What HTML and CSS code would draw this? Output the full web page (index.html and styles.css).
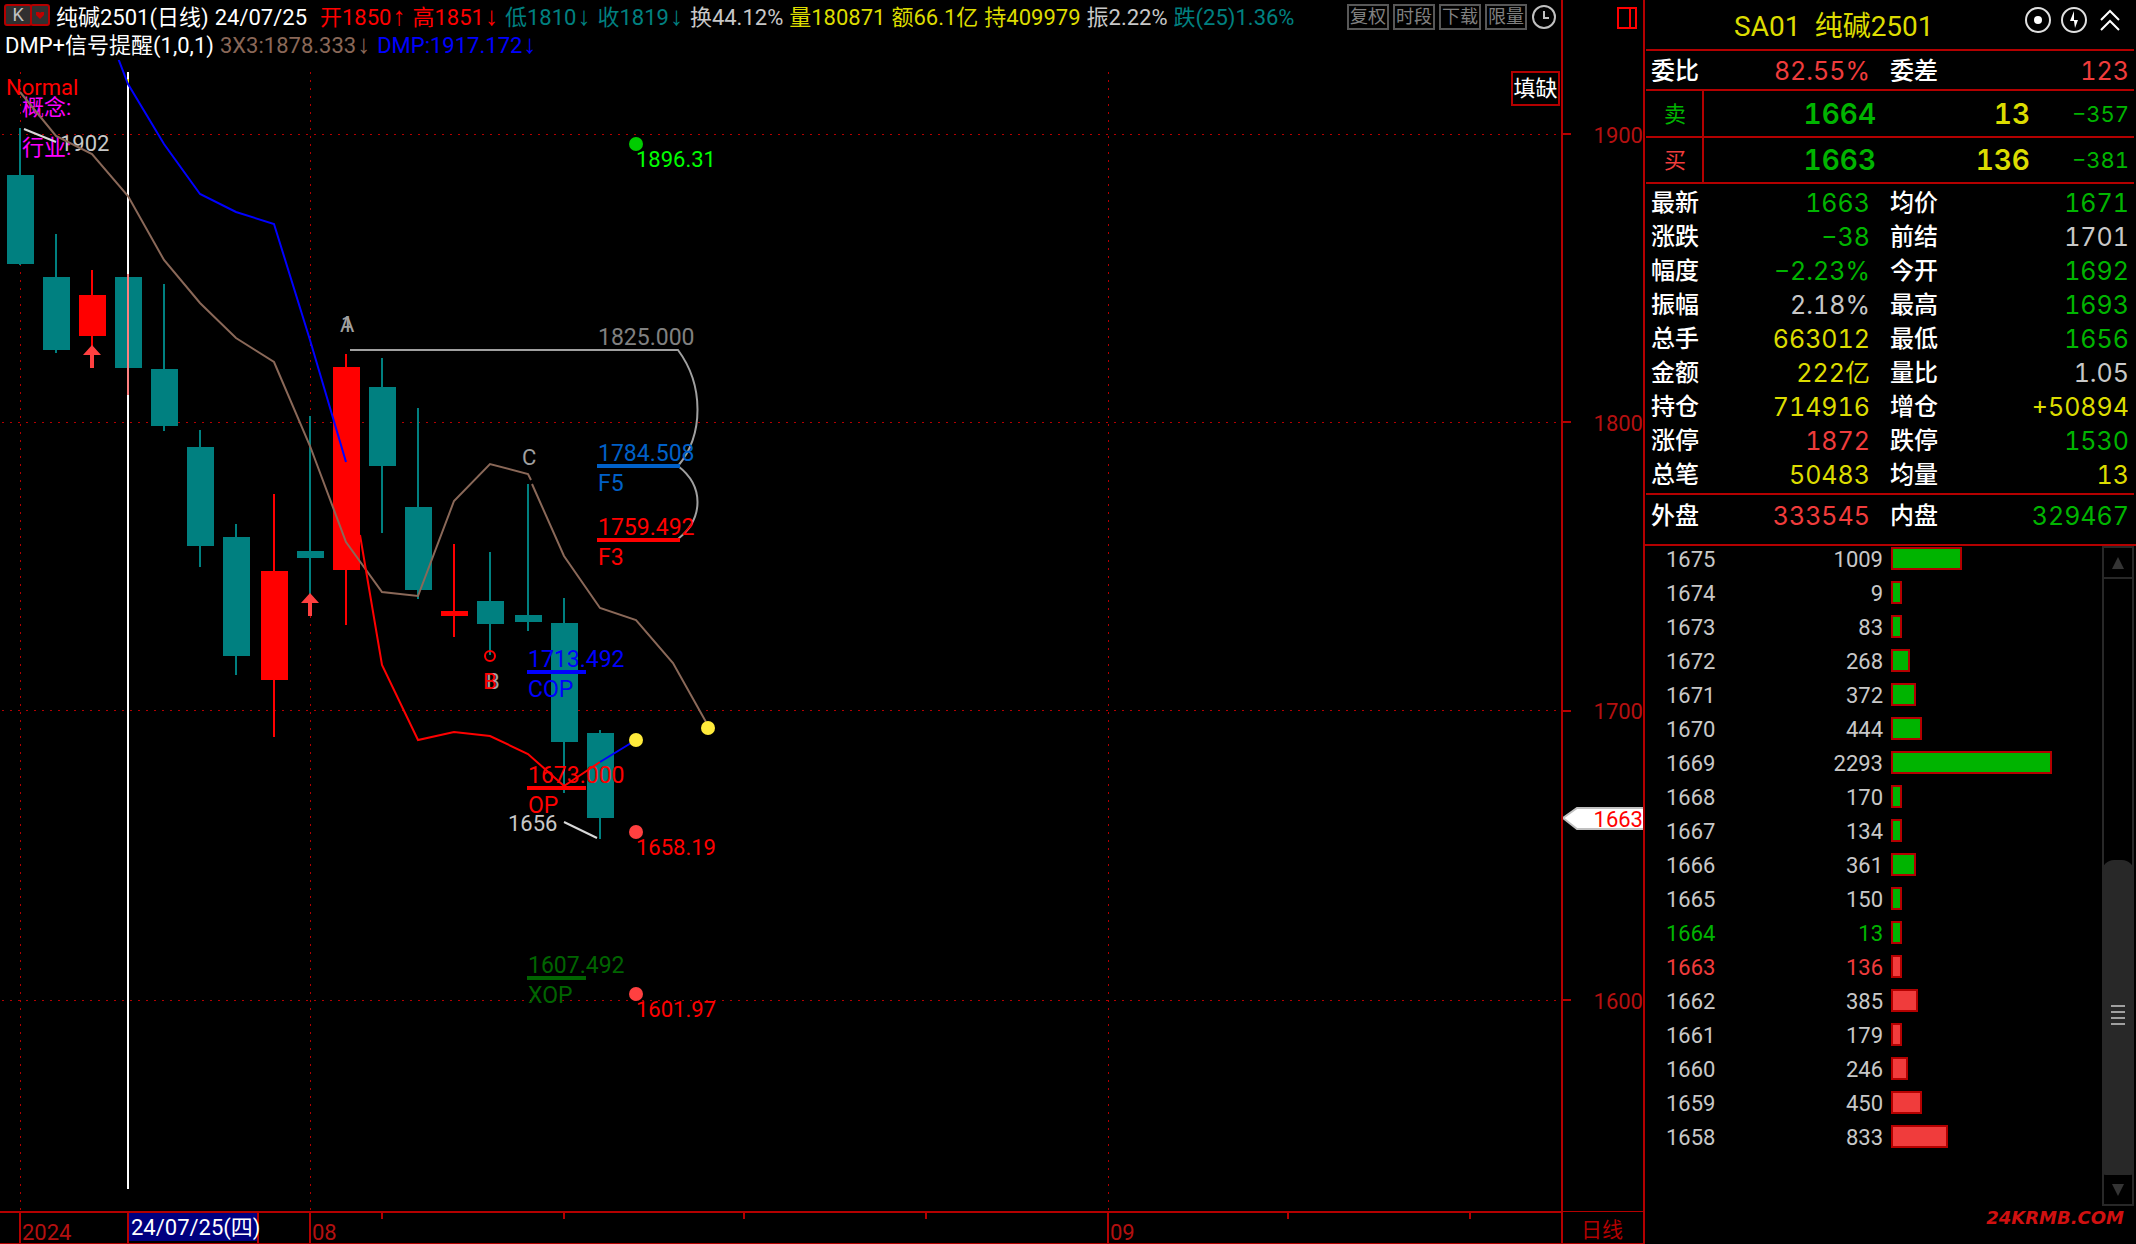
FILE: index.html
```html
<!DOCTYPE html>
<html lang="zh-CN">
<head>
<meta charset="utf-8">
<title>SA01 纯碱2501</title>
<link rel="stylesheet" href="styles.css">
</head>
<body>
<main class="board">
  <section class="chart">
    <header class="info">
      <div class="info-row">
        <div class="period">
          <button class="period-key" type="button">K</button>
          <button class="period-more" type="button" aria-label="周期"><svg width="10" height="8" viewBox="0 0 10 8"><path d="M1 1h3l1 1 1-1h3v3L5 8 1 4z" fill="#c00000"/></svg></button>
        </div>
        <h1 class="quote white">纯碱2501(日线)</h1>
        <span class="date white">24/07/25</span>
        <span class="red">开1850<i class="arr">↑</i></span>
        <span class="red">高1851<i class="arr">↓</i></span>
        <span class="teal">低1810<i class="arr">↓</i></span>
        <span class="teal">收1819<i class="arr">↓</i></span>
        <span class="silver">换44.12%</span>
        <span class="yellow">量180871</span>
        <span class="yellow">额66.1亿</span>
        <span class="yellow">持409979</span>
        <span class="silver">振2.22%</span>
        <span class="teal">跌(25)1.36%</span>
        <nav class="tools">
          <button type="button">复权</button>
          <button type="button">时段</button>
          <button type="button">下载</button>
          <button type="button">限量</button>
          <button type="button" class="clock" aria-label="时钟"><svg width="26" height="26" viewBox="0 0 26 26" fill="none" stroke="#c0c0c0" stroke-width="2"><circle cx="13" cy="13" r="11"/><path d="M13 7v7h5"/></svg></button>
        </nav>
      </div>
      <div class="info-row second">
        <span class="white">DMP+信号提醒(1,0,1)</span>
        <span class="brown">3X3:1878.333<i class="arr">↓</i></span>
        <span class="blue">DMP:1917.172<i class="arr">↓</i></span>
      </div>
    </header>
    <button class="gap-btn" type="button">填缺</button>
    <svg class="plot" role="img" aria-label="日线K线图">
      <g transform="translate(0 -60)">
        <g class="grid">
          <line x1="2" y1="134.5" x2="100%" y2="134.5"/>
          <line x1="2" y1="422.5" x2="100%" y2="422.5"/>
          <line x1="2" y1="710.5" x2="100%" y2="710.5"/>
          <line x1="2" y1="1000.5" x2="100%" y2="1000.5"/>
          <line x1="20.5" y1="72" x2="20.5" y2="1210"/>
          <line x1="310.5" y1="72" x2="310.5" y2="1210"/>
          <line x1="1108.5" y1="72" x2="1108.5" y2="1210"/>
        </g>
        <g class="down">
          <path d="M19 128h2v137h-2zM7 175h27v89H7z"/>
          <path d="M55 234h2v119h-2zM43 277h27v73H43z"/>
          <path d="M115 277h27v91h-27z"/>
          <path d="M163 284h2v147h-2zM151 369h27v57h-27z"/>
          <path d="M199 430h2v137h-2zM187 447h27v99h-27z"/>
          <path d="M235 524h2v151h-2zM223 537h27v119h-27z"/>
          <path d="M309 416h2v179h-2zM297 551h27v7h-27z"/>
          <path d="M381 358h2v175h-2zM369 387h27v79h-27z"/>
          <path d="M417 408h2v191h-2zM405 507h27v83h-27z"/>
          <path d="M489 552h2v103h-2zM477 601h27v23h-27z"/>
          <path d="M527 484h2v147h-2zM515 615h27v7h-27z"/>
          <path d="M563 598h2v195h-2zM551 623h27v119h-27z"/>
          <path d="M599 730h2v109h-2zM587 733h27v85h-27z"/>
        </g>
        <g class="up">
          <path d="M91 270h2v78h-2zM79 295h27v41H79z"/>
          <path d="M273 494h2v243h-2zM261 571h27v109h-27z"/>
          <path d="M345 354h2v271h-2zM333 367h27v203h-27z"/>
          <path d="M453 544h2v93h-2zM441 611h27v5h-27z"/>
        </g>
        <path class="signal" d="M92 345l9 10h-7v13h-4v-13h-7z"/>
        <path class="signal" d="M310 593l9 10h-7v13h-4v-13h-7z"/>
        <rect x="127" y="72" width="2" height="1117" fill="#ffffff"/>
        <rect x="127" y="274" width="2" height="121" fill="#ff8080"/>
        <rect x="127" y="79" width="2" height="6" fill="#ffff00"/>

        <text class="magenta" x="22" y="115">概念:</text>
        <text class="magenta" x="22" y="155">行业:</text>
        <text class="silver" x="60" y="151">1902</text>
        <path class="lead" d="M24 129L56 142"/>
        <text class="red" x="6" y="95">Normal</text>

        <polyline class="ln brown" points="20,92 56,136 92,154 128,196 164,260 200,303 236,338 274,362 310,446 346,542 382,592 418,596 454,501 490,464 528,474 531,480"/>
        <polyline class="ln brown" points="532,484 564,556 600,608 636,620 673,663 706,722"/>
        <polyline class="ln blue" points="118,58 128,84 164,144 200,194 236,212 274,224 310,340 346,462"/>
        <polyline class="ln red" points="360,535 382,665 418,740 454,732 490,736 528,754 564,786 600,762"/>
        <polyline class="ln blue" points="600,762 636,740"/>

        <text class="grey" x="340" y="332">A</text>
        <text class="grey" x="341" y="332">1</text>
        <path class="measure" d="M350 350H678C704 385 704 435 678 466C704 486 704 518 678 539"/>
        <text class="lab grey2" x="598" y="345">1825.000</text>
        <text class="lab azure" x="598" y="461">1784.508</text>
        <path class="level azure" d="M597 466H680"/>
        <text class="lab azure" x="598" y="491">F5</text>
        <text class="lab red" x="598" y="535">1759.492</text>
        <path class="level red" d="M597 540H680"/>
        <text class="lab red" x="598" y="565">F3</text>
        <text class="grey" x="522" y="465">C</text>
        <circle cx="490" cy="656" r="5" fill="none" stroke="#ff0000" stroke-width="2"/>
        <text class="grey" x="486" y="689">B</text>
        <text class="red" x="483" y="689">B</text>
        <text class="lab blue" x="528" y="667">1713.492</text>
        <path class="level blue" d="M527 672H586"/>
        <text class="lab blue" x="528" y="697">COP</text>
        <text class="lab red" x="528" y="783">1673.000</text>
        <path class="level red" d="M527 788H586"/>
        <text class="lab red" x="528" y="813">OP</text>
        <text class="silver" x="508" y="831">1656</text>
        <path class="lead" d="M564 822L597 838"/>
        <text class="lab forest" x="528" y="973">1607.492</text>
        <path class="level forest" d="M527 978H586"/>
        <text class="lab forest" x="528" y="1003">XOP</text>

        <circle cx="636" cy="144" r="7" fill="#00cc00"/>
        <text class="lime" x="636" y="167">1896.31</text>
        <circle cx="636" cy="740" r="7" fill="#ffeb3b"/>
        <circle cx="708" cy="728" r="7" fill="#ffeb3b"/>
        <circle cx="636" cy="832" r="7" fill="#ff4040"/>
        <text class="red" x="636" y="855">1658.19</text>
        <circle cx="636" cy="994" r="7" fill="#ff4040"/>
        <text class="red" x="636" y="1017">1601.97</text>
      </g>
    </svg>
  </section>

  <section class="axis">
    <svg class="scale" role="img" aria-label="价格坐标">
      <path d="M55 8h18v20H55zM67 8v20" fill="none" stroke="#ff0000" stroke-width="2"/>
      <path d="M0 134h8M0 422h8M0 711h8M0 1000h8" stroke="#b40000" stroke-width="2"/>
      <text class="dark" x="80" y="143">1900</text>
      <text class="dark" x="80" y="431">1800</text>
      <text class="dark" x="80" y="719">1700</text>
      <text class="dark" x="80" y="1009">1600</text>
      <path d="M0 818L14 808H82V829H14z" fill="#ffffff" stroke="#c0c0c0" stroke-width="2"/>
      <text class="red" x="80" y="827">1663</text>
    </svg>
  </section>

  <section class="dates">
    <svg class="days" role="img" aria-label="日期坐标">
      <path d="M20 0v31M310 0v31M1108 0v31M382 0v6M564 0v6M744 0v6M926 0v6M1288 0v6M1470 0v6" stroke="#b40000" stroke-width="2"/>
      <rect x="128" y="0" width="130" height="28" fill="#000080"/>
      <path d="M128 0v31M258 0v31" stroke="#b40000" stroke-width="2"/>
      <text class="dark" x="22" y="27">2024</text>
      <text class="white" x="131" y="22">24/07/25(四)</text>
      <text class="dark" x="312" y="27">08</text>
      <text class="dark" x="1110" y="27">09</text>
    </svg>
  </section>
  <div class="mode">日线</div>
</main>

<aside class="side">
  <header class="side-head">
    <h2>SA01&ensp;纯碱2501</h2>
    <div class="side-tools">
      <button type="button" aria-label="定位"><svg width="26" height="26" viewBox="0 0 26 26" fill="none" stroke="#e0e0e0" stroke-width="2"><circle cx="13" cy="13" r="12"/><circle cx="13" cy="13" r="4" fill="#ffffff" stroke="none"/></svg></button>
      <button type="button" aria-label="闪电"><svg width="26" height="26" viewBox="0 0 26 26" fill="none" stroke="#e0e0e0" stroke-width="2"><circle cx="13" cy="13" r="12"/><path d="M13 4L9 14h4l1 7 3-8h-4z" fill="#ffffff" stroke="none"/></svg></button>
      <button type="button" aria-label="收起"><svg width="26" height="26" viewBox="0 0 26 26" fill="none" stroke="#ffffff" stroke-width="2"><path d="M4 13l9-9 9 9M4 23l9-9 9 9"/></svg></button>
    </div>
  </header>
  <table class="pairs ratio">
    <tr><th>委比</th><td class="rose">82.55%</td><th>委差</th><td class="rose">123</td></tr>
  </table>
  <table class="best">
    <tr><th class="green">卖</th><td class="green">1664</td><td class="yellow">13</td><td class="diff">−357</td></tr>
    <tr><th class="rose">买</th><td class="green">1663</td><td class="yellow">136</td><td class="diff">−381</td></tr>
  </table>
  <table class="pairs stats">
    <tr><th>最新</th><td class="green">1663</td><th>均价</th><td class="green">1671</td></tr>
    <tr><th>涨跌</th><td class="green">−38</td><th>前结</th><td class="silver">1701</td></tr>
    <tr><th>幅度</th><td class="green">−2.23%</td><th>今开</th><td class="green">1692</td></tr>
    <tr><th>振幅</th><td class="silver">2.18%</td><th>最高</th><td class="green">1693</td></tr>
    <tr><th>总手</th><td class="yellow">663012</td><th>最低</th><td class="green">1656</td></tr>
    <tr><th>金额</th><td class="yellow">222亿</td><th>量比</th><td class="silver">1.05</td></tr>
    <tr><th>持仓</th><td class="yellow">714916</td><th>增仓</th><td class="yellow">+50894</td></tr>
    <tr><th>涨停</th><td class="rose">1872</td><th>跌停</th><td class="green">1530</td></tr>
    <tr><th>总笔</th><td class="yellow">50483</td><th>均量</th><td class="yellow">13</td></tr>
  </table>
  <table class="pairs volume">
    <tr><th>外盘</th><td class="rose">333545</td><th>内盘</th><td class="green">329467</td></tr>
  </table>
  <div class="ladder">
    <table class="levels">
      <tr><td>1675</td><td>1009</td><td><div class="bar" style="width:71px"></div></td></tr>
      <tr><td>1674</td><td>9</td><td><div class="bar" style="width:11px"></div></td></tr>
      <tr><td>1673</td><td>83</td><td><div class="bar" style="width:11px"></div></td></tr>
      <tr><td>1672</td><td>268</td><td><div class="bar" style="width:19px"></div></td></tr>
      <tr><td>1671</td><td>372</td><td><div class="bar" style="width:25px"></div></td></tr>
      <tr><td>1670</td><td>444</td><td><div class="bar" style="width:31px"></div></td></tr>
      <tr><td>1669</td><td>2293</td><td><div class="bar" style="width:161px"></div></td></tr>
      <tr><td>1668</td><td>170</td><td><div class="bar" style="width:11px"></div></td></tr>
      <tr><td>1667</td><td>134</td><td><div class="bar" style="width:11px"></div></td></tr>
      <tr><td>1666</td><td>361</td><td><div class="bar" style="width:25px"></div></td></tr>
      <tr><td>1665</td><td>150</td><td><div class="bar" style="width:11px"></div></td></tr>
      <tr class="green"><td>1664</td><td>13</td><td><div class="bar" style="width:11px"></div></td></tr>
      <tr class="rose"><td>1663</td><td>136</td><td><div class="bar buy" style="width:11px"></div></td></tr>
      <tr><td>1662</td><td>385</td><td><div class="bar buy" style="width:27px"></div></td></tr>
      <tr><td>1661</td><td>179</td><td><div class="bar buy" style="width:11px"></div></td></tr>
      <tr><td>1660</td><td>246</td><td><div class="bar buy" style="width:17px"></div></td></tr>
      <tr><td>1659</td><td>450</td><td><div class="bar buy" style="width:31px"></div></td></tr>
      <tr><td>1658</td><td>833</td><td><div class="bar buy" style="width:57px"></div></td></tr>
    </table>
    <div class="scroll">
      <button type="button" aria-label="向上"><svg width="12" height="12" viewBox="0 0 12 12"><path d="M6 0l6 12H0z" fill="#343434"/></svg></button>
      <div class="track"></div>
      <div class="thumb"><i></i><i></i><i></i><i></i></div>
      <button type="button" aria-label="向下"><svg width="12" height="12" viewBox="0 0 12 12"><path d="M6 12L0 0h12z" fill="#343434"/></svg></button>
    </div>
  </div>
  <footer class="site">24KRMB.COM</footer>
</aside>
</body>
</html>
```

FILE: styles.css
```css
* { box-sizing: border-box; }

body {
  margin: 0;
  min-height: 100vh;
  display: grid;
  grid-template-columns: minmax(0, 1fr) 493px;
  background: #000000;
  color: #c8c8c8;
  font: 22px/28px Roboto, "Noto Sans CJK SC", sans-serif;
}

button {
  margin: 0;
  padding: 0;
  border: 0;
  background: none;
  color: inherit;
  font: inherit;
}

h1, h2 { margin: 0; font: inherit; }
svg { display: block; }
table { border-collapse: collapse; table-layout: fixed; width: 100%; }
th, td { padding: 0; font-weight: 400; }

/* palette */
.white { color: #ffffff; fill: #ffffff; }
.silver { color: #c8c8c8; fill: #c8c8c8; }
.grey { fill: #a0a0a0; }
.grey2 { fill: #808080; }
.red { color: #ff0000; fill: #ff0000; }
.rose { color: #f03c3c; }
.green { color: #00b400; }
.lime { fill: #00ff00; }
.forest { fill: #006400; }
.teal { color: #008080; }
.yellow { color: #dcdc00; }
.brown { color: #8a6858; }
.blue { color: #0000ff; fill: #0000ff; }
.azure { fill: #0060c8; }
.magenta { fill: #ff00ff; }
.dark { fill: #b41010; }

/* chart area */
.board {
  display: grid;
  grid-template-columns: minmax(0, 1fr) 82px;
  grid-template-rows: minmax(0, 1fr) 33px;
}

.chart {
  position: relative;
  display: flex;
  flex-direction: column;
}

.info { height: 60px; padding-top: 4px; }

.info-row {
  display: flex;
  gap: 6px;
  height: 28px;
  padding: 0 4px;
  white-space: nowrap;
}

.info-row.second { padding-left: 5px; }
.date { margin-right: 7px; }

.arr {
  display: inline-block;
  width: 15px;
  font-family: "Liberation Sans", sans-serif;
  font-size: 26px;
  font-style: normal;
  line-height: 20px;
  text-align: center;
}

.period {
  display: flex;
  width: 46px;
  height: 22px;
}

.period-key, .period-more {
  border: 2px solid #b40000;
  border-radius: 3px;
  background: #303030;
  color: #c0c0c0;
  font-size: 18px;
  line-height: 16px;
}

.period-key { width: 32px; }

.period-more {
  display: grid;
  place-items: center;
  width: 22px;
  margin-left: -2px;
}

.tools {
  display: flex;
  gap: 4px;
  margin-left: auto;
}

.tools button {
  width: 42px;
  height: 26px;
  border: 2px solid #585858;
  color: #808080;
  font-size: 18px;
  line-height: 22px;
}

.tools .clock { width: 26px; border: 0; }

.gap-btn {
  position: absolute;
  top: 71px;
  right: 1px;
  width: 49px;
  height: 35px;
  border: 2px solid #b40000;
  color: #ffffff;
  line-height: 30px;
}

.plot { flex: 1; width: 100%; min-height: 0; }

.grid line {
  stroke: #b40000;
  stroke-width: 1;
  stroke-dasharray: 2 6;
  shape-rendering: crispEdges;
}

.down { fill: #008080; shape-rendering: crispEdges; }
.up { fill: #ff0000; shape-rendering: crispEdges; }
.signal { fill: #ff4040; }
.ln { fill: none; stroke-width: 2; }
.ln.brown { stroke: #8a6858; }
.ln.blue { stroke: #0000ff; }
.ln.red { stroke: #ff0000; }
.lead { stroke: #d8d8d8; stroke-width: 2; }
.measure { fill: none; stroke: #a0a0a0; stroke-width: 2; }
.level { stroke-width: 4; }
.level.azure { stroke: #0060c8; }
.level.red { stroke: #ff0000; }
.level.blue { stroke: #0000ff; }
.level.forest { stroke: #006400; }
.lab { font-size: 23px; }

.axis { border-left: 2px solid #b40000; }
.scale { width: 100%; height: 100%; }
.scale text { text-anchor: end; }

.dates {
  border-top: 2px solid #b40000;
  border-bottom: 1px solid #b40000;
}

.days { width: 100%; height: 30px; overflow: visible; }

.mode {
  border: 1px solid #b40000;
  border-width: 1px 0 1px 2px;
  padding-left: 18px;
  color: #b40000;
  font-size: 21px;
  line-height: 36px;
  overflow: hidden;
}

/* quote panel */
.side {
  display: flex;
  flex-direction: column;
  border-left: 2px solid #b40000;
  font-family: Inter, "Noto Sans CJK SC", sans-serif;
  font-variant-numeric: tabular-nums;
}

.side-head {
  display: flex;
  justify-content: space-between;
  height: 51px;
  margin: 0 2px 0 1px;
  padding: 7px 11px 0 88px;
  border-bottom: 2px solid #b40000;
  color: #dcdc00;
}

.side-head h2 { font: 28px/40px Roboto, "Noto Sans CJK SC", sans-serif; }
.side-tools { display: flex; gap: 10px; }
.side-tools button { width: 26px; height: 26px; }

.pairs th {
  padding-left: 5px;
  color: #ffffff;
  font-size: 24px;
  font-weight: 500;
  text-align: left;
}

.pairs td {
  padding-right: 5px;
  font-size: 25px;
  text-align: right;
}

.pairs tr { height: 34px; }
.pairs th:first-child { width: 80px; }
.pairs th:nth-child(3) { width: 80px; padding-left: 15px; }
.pairs td:nth-child(2) { width: 149px; }

.pairs, .best {
  width: auto;
  margin: 0 2px 0 1px;
}

.ratio { border-bottom: 2px solid #b40000; }
.ratio tr { height: 39px; }
.ratio th, .ratio td { padding-top: 2px; }

.best tr { height: 46px; border-bottom: 2px solid #b40000; }

.best th {
  width: 57px;
  padding-left: 2px;
  border-right: 2px solid #b40000;
  font-size: 22px;
}

.best td {
  font-size: 28px;
  font-weight: 600;
  text-align: right;
}

.best td:nth-child(2) { width: 173px; }
.best td:nth-child(3) { width: 154px; }

.best .diff {
  padding-right: 5px;
  color: #00b400;
  font-size: 22px;
  font-weight: 400;
}

.stats { margin-top: 2px; }

.volume { border-top: 2px solid #b40000; margin-top: 1px; }
.volume tr { height: 42px; }

.ladder {
  display: flex;
  margin-top: 8px;
  border-top: 2px solid #b40000;
  padding-right: 2px;
}

.levels {
  flex: 1;
  align-self: flex-start;
  margin-top: 1px;
  font-family: Roboto, sans-serif;
  line-height: 25px;
}

.levels tr { height: 34px; }
.levels td { vertical-align: top; }
.levels td:first-child { width: 100px; padding-left: 21px; }
.levels td:nth-child(2) { width: 138px; text-align: right; }
.levels td:nth-child(3) { padding-left: 8px; }

.bar {
  height: 23px;
  border: 2px solid #b40000;
  background: #00b400;
}

.bar.buy { background: #f03c3c; }

.scroll {
  display: flex;
  flex-direction: column;
  width: 32px;
  height: 660px;
  border: 2px solid #282828;
}

.scroll button {
  display: grid;
  place-items: center;
  flex: 0 0 29px;
}

.track {
  flex: 0 0 283px;
  border-top: 2px solid #282828;
}

.thumb {
  flex: 1;
  display: flex;
  flex-direction: column;
  align-items: center;
  justify-content: center;
  gap: 4px;
  margin: 0 -2px;
  padding-bottom: 6px;
  border-radius: 12px 12px 4px 4px;
  background: #282828;
}

.thumb i {
  width: 14px;
  height: 2px;
  background: #a0a0a0;
}

.site {
  padding-right: 12px;
  color: #d01010;
  font: italic bold 18px/24px "DejaVu Sans", sans-serif;
  text-align: right;
}
```
